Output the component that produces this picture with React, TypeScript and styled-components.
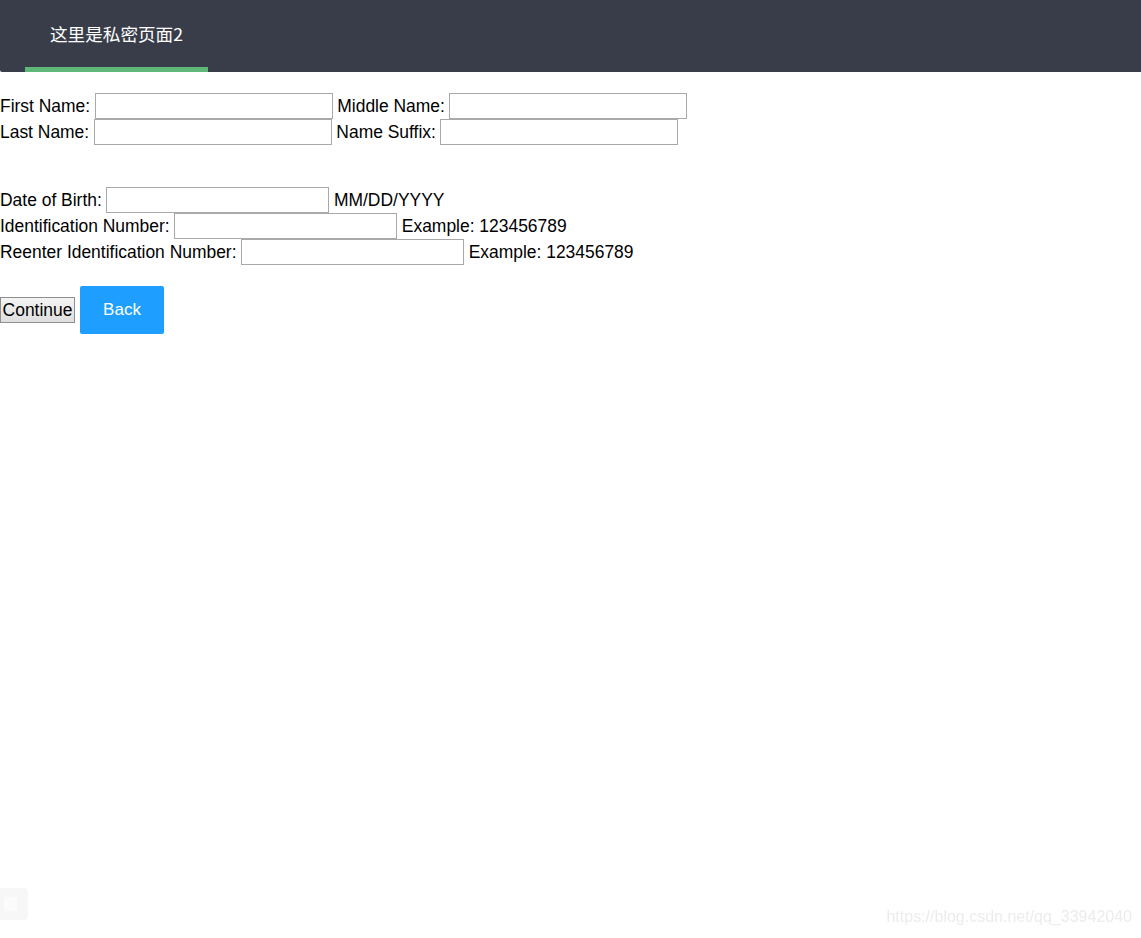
import React from 'react'
import styled, { createGlobalStyle } from 'styled-components'

const GlobalStyle = createGlobalStyle`
  html, body {
    margin: 0;
    padding: 0;
    background: #fff;
  }
  body {
    font-family: "Liberation Sans", Arial, "Noto Sans CJK SC", sans-serif;
    font-size: 17.45px;
    color: #000;
  }
`

const Header = styled.div`
  height: 72px;
  background: #393d49;
  border-bottom-left-radius: 2px;
  padding-left: 25px;
  display: flex;
  align-items: stretch;
`

const NavItem = styled.div<{ $active?: boolean }>`
  display: flex;
  align-items: center;
  padding: 0 25px;
  box-sizing: border-box;
  color: #fff;
  font-family: "Noto Sans CJK SC", "Liberation Sans", sans-serif;
  font-size: 17.6px;
  line-height: 1;
  border-bottom: 5px solid ${(p) => (p.$active ? '#5fb878' : 'transparent')};
`

const Form = styled.form`
  padding-top: 21px;
  display: flex;
  flex-direction: column;
`

const Row = styled.div`
  display: flex;
  align-items: center;
  height: 26px;
  gap: 4.6px;
  white-space: nowrap;
`

const Spacer = styled.div`
  height: 42px;
`

const Input = styled.input<{ $w?: number }>`
  box-sizing: border-box;
  width: ${(p) => p.$w ?? 238}px;
  height: 26px;
  margin: 0;
  padding: 1px 2px;
  border: 1px solid #a9a9a9;
  font: inherit;
  outline: none;
`

const Actions = styled.div`
  display: flex;
  align-items: center;
  gap: 5px;
  margin-top: 21px;
`

const PlainButton = styled.button`
  box-sizing: border-box;
  height: 26px;
  width: 75px;
  padding: 0;
  margin: 0;
  font: inherit;
  color: #000;
  background: linear-gradient(#f4f4f4, #dedede);
  border: 1px solid #8f8f8f;
  border-radius: 0;
`

const BlueButton = styled.button`
  box-sizing: border-box;
  height: 48px;
  width: 84px;
  padding: 0;
  margin: 0;
  border: none;
  border-radius: 2px;
  background: #1e9fff;
  color: #fff;
  font-family: "Liberation Sans", Arial, sans-serif;
  font-size: 17px;
`

const CornerBox = styled.div`
  position: fixed;
  left: 0;
  top: 888px;
  width: 28px;
  height: 32px;
  background: #f7f7f7;
  border-radius: 0 4px 4px 0;
  display: flex;
  align-items: center;
  padding-left: 4px;
  box-sizing: border-box;
`

const CornerInner = styled.div`
  width: 13px;
  height: 14px;
  background: #fbfbfb;
  border-radius: 2px;
`

const Watermark = styled.div`
  position: fixed;
  right: 9px;
  top: 908px;
  color: #ececec;
  font-family: "Liberation Sans", Arial, sans-serif;
  font-size: 16px;
`

const App: React.FC = () => {
  return (
    <>
      <GlobalStyle />
      <Header>
        <NavItem $active>这里是私密页面2</NavItem>
      </Header>
      <Form onSubmit={(e) => e.preventDefault()}>
        <Row>
          First Name:
          <Input type="text" />
          Middle Name:
          <Input type="text" />
        </Row>
        <Row>
          Last Name:
          <Input type="text" />
          Name Suffix:
          <Input type="text" />
        </Row>
        <Spacer />
        <Row>
          Date of Birth:
          <Input type="text" $w={223} />
          MM/DD/YYYY
        </Row>
        <Row>
          Identification Number:
          <Input type="text" $w={223} />
          Example: 123456789
        </Row>
        <Row>
          Reenter Identification Number:
          <Input type="text" $w={223} />
          Example: 123456789
        </Row>
        <Actions>
          <PlainButton type="submit">Continue</PlainButton>
          <BlueButton type="button">Back</BlueButton>
        </Actions>
      </Form>
      <CornerBox>
        <CornerInner />
      </CornerBox>
      <Watermark>https://blog.csdn.net/qq_33942040</Watermark>
    </>
  )
}

export default App
